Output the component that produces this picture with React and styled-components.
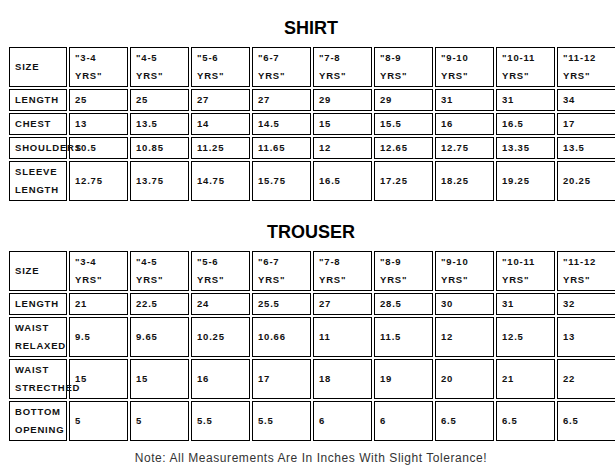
import React from 'react';
import styled, { createGlobalStyle } from 'styled-components';

const GlobalStyle = createGlobalStyle`
  html, body {
    margin: 0;
    padding: 0;
    background: #fff;
    overflow: hidden;
  }
  body {
    font-family: "Liberation Sans", Arial, sans-serif;
  }
`;

const sizes = ['3-4', '4-5', '5-6', '6-7', '7-8', '8-9', '9-10', '10-11', '11-12'];

const shirtRows = [
    { label: 'LENGTH', values: ['25', '25', '27', '27', '29', '29', '31', '31', '34'] },
    { label: 'CHEST', values: ['13', '13.5', '14', '14.5', '15', '15.5', '16', '16.5', '17'] },
    { label: 'SHOULDERS', values: ['10.5', '10.85', '11.25', '11.65', '12', '12.65', '12.75', '13.35', '13.5'] },
    { label: 'SLEEVE LENGTH', values: ['12.75', '13.75', '14.75', '15.75', '16.5', '17.25', '18.25', '19.25', '20.25'] },
];

const trouserRows = [
    { label: 'LENGTH', values: ['21', '22.5', '24', '25.5', '27', '28.5', '30', '31', '32'] },
    { label: 'WAIST RELAXED', values: ['9.5', '9.65', '10.25', '10.66', '11', '11.5', '12', '12.5', '13'] },
    { label: 'WAIST STRECTHED', values: ['15', '15', '16', '17', '18', '19', '20', '21', '22'] },
    { label: 'BOTTOM OPENING', values: ['5', '5', '5.5', '5.5', '6', '6', '6.5', '6.5', '6.5'] },
];

const Page = styled.div`
    padding: 18px 0 0 7px;
    width: 700px;
`;

const Title = styled.h2`
    margin: ${(p) => (p.$spaced ? '19px' : '0')} 0 7px;
    width: 608px;
    text-align: center;
    font-size: 18px;
    line-height: 20px;
    font-weight: bold;
    color: #000;
`;

const Table = styled.table`
    table-layout: fixed;
    border-collapse: separate;
    border-spacing: 2px;
    width: 611px;
`;

const Cell = styled.td`
    box-sizing: border-box;
    width: ${(p) => (p.$label ? '58px' : '59px')};
    border: 1px solid #000;
    padding: 1px 5px;
    line-height: 18px;
    font-size: 9.5px;
    font-weight: bold;
    letter-spacing: 0.8px;
    color: #111;
    vertical-align: middle;
    white-space: ${(p) => (p.$label ? 'normal' : 'nowrap')};
    overflow: visible;
`;

const Note = styled.p`
    margin: 8px 0 0;
    width: 608px;
    text-align: center;
    font-size: 12px;
    letter-spacing: 0.55px;
    color: #333;
`;

const SizeTable = ({ rows }) => (
    <Table>
        <tbody>
            <tr>
                <Cell $label>SIZE</Cell>
                {sizes.map((s) => (
                    <Cell key={s}>"{s}<br />YRS"</Cell>
                ))}
            </tr>
            {rows.map((row) => (
                <tr key={row.label}>
                    <Cell $label>{row.label}</Cell>
                    {row.values.map((v, i) => (
                        <Cell key={i}>{v}</Cell>
                    ))}
                </tr>
            ))}
        </tbody>
    </Table>
);

const App = () => {
    return (
        <Page>
            <GlobalStyle />
            <Title>SHIRT</Title>
            <SizeTable rows={shirtRows} />
            <Title $spaced>TROUSER</Title>
            <SizeTable rows={trouserRows} />
            <Note>Note: All Measurements Are In Inches With Slight Tolerance!</Note>
        </Page>
    );
};

export default App;
